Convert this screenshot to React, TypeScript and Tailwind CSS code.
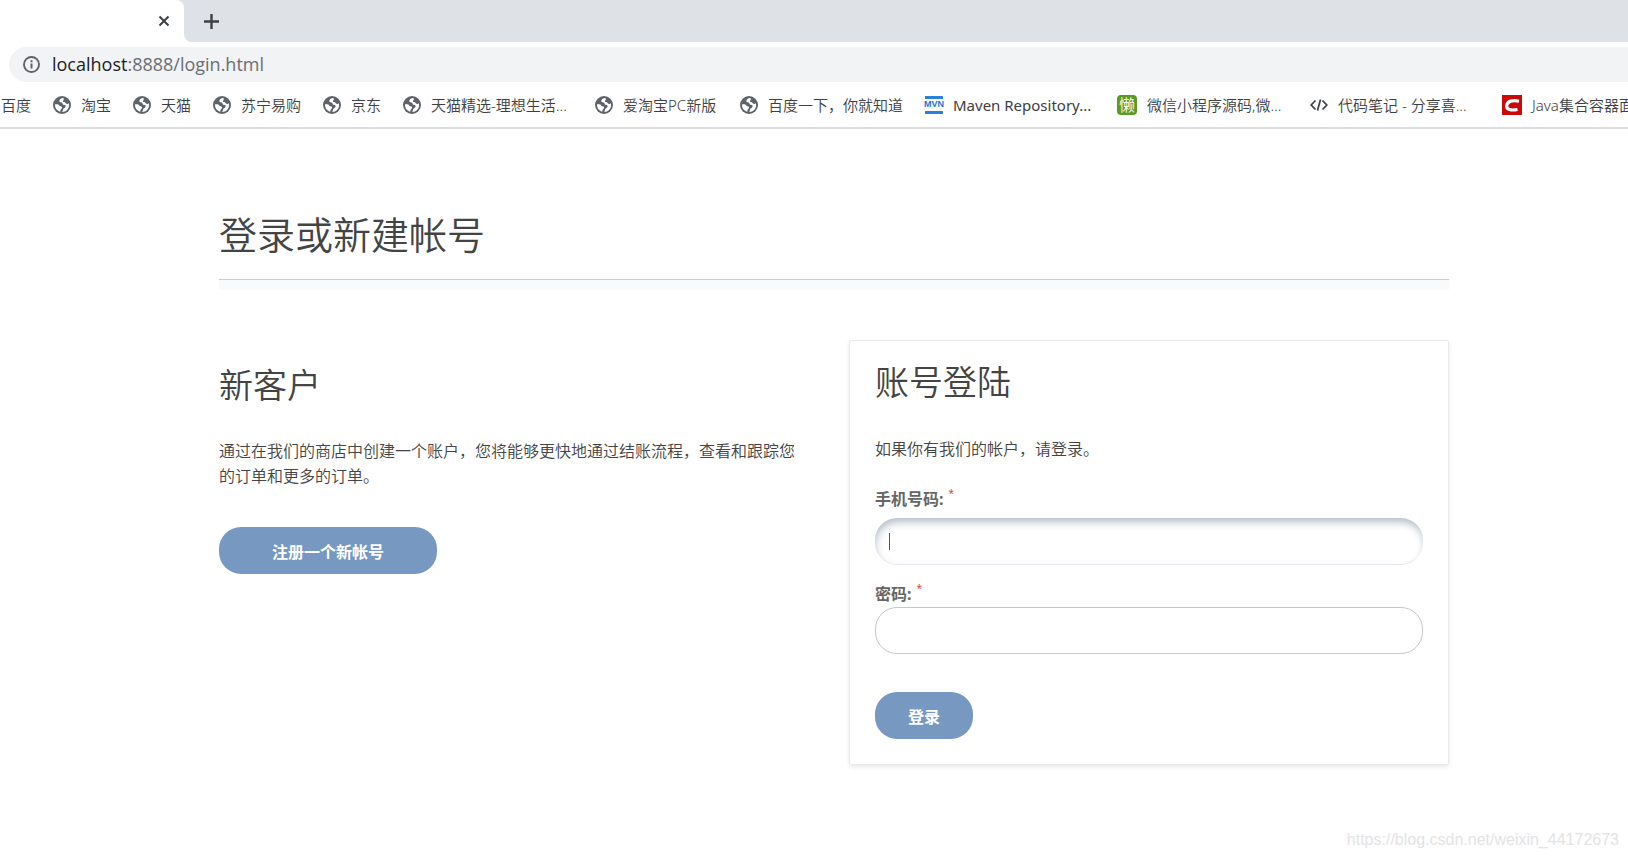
import clsx from "clsx";
import type { InputHTMLAttributes, ReactNode } from "react";

function GlobeIcon() {
  return (
    <svg viewBox="0 0 18 18" className="h-[18px] w-[18px]" aria-hidden="true">
      <circle cx="9" cy="9" r="9" fill="#5f6368" />
      <path
        d="M10.300 2.100C7.800 2.300 6.300 3.500 6.300 5.100c0 1 .8 1.300 1.900 1.300 1 0 1.300.4 1.300 1.100 0 .9.500 1.200 1.500 1.300 1.300.1 1.700.7 1.600 1.600-.1 1.200-1.300 1.500-2 2.200-.7.8-.6 2-1.400 3.400 3.900-.1 6.900-3.100 6.900-7 0-.6-.1-1.200-.2-1.700-.7.5-1.600.8-2.500.5-.9-.4-.8-1.300-1.600-1.600-.8-.4-1.800-.2-1.900-1-.1-.8.900-1 .9-1.800 0-.5-.2-.9-.5-1.300z"
        fill="#fff"
      />
      <path
        d="M2 8.300c-.2 3.600 1.700 6.400 5.300 7.400.1-.9.100-1.600.5-2.200.5-.7 1.400-1 1.300-2-.1-1.300-1.300-1.300-2.200-1.600C5.800 9.500 6 8.300 4.500 8.300z"
        fill="#fff"
      />
    </svg>
  );
}

function MavenIcon() {
  return (
    <span className="flex h-[18px] w-[18px] items-center justify-center border-y-[3px] border-[#2a80e0] font-['Liberation_Sans',sans-serif] text-[9px] font-bold text-[#1a73d9]">
      MVN
    </span>
  );
}

function LazyIcon() {
  return (
    <span className="flex h-5 w-5 items-center justify-center rounded-sm bg-[#5b9a26] text-[16px] text-white">
      懒
    </span>
  );
}

function CodeIcon() {
  return (
    <svg
      viewBox="0 0 18 18"
      className="h-[18px] w-[18px]"
      fill="none"
      stroke="#3c4043"
      strokeWidth="1.700"
      aria-hidden="true"
    >
      <path d="M5.500 4.500 1.200 9l4.300 4.500M12.500 4.500 16.800 9l-4.300 4.500M10.500 3.500l-3 11" />
    </svg>
  );
}

function CsdnIcon() {
  return (
    <svg viewBox="0 0 20 20" className="h-5 w-5" aria-hidden="true">
      <path fill="#c90a0a" d="M0 0h20v20H0z" />
      <path
        d="M17 6.200C10.500 5 5.500 5.700 4.700 10.500c-.6 4.300 4.300 5.200 10.800 4"
        fill="none"
        stroke="#fff"
        strokeWidth="3.200"
      />
    </svg>
  );
}

type Bookmark = { label: string; icon: ReactNode; className: string };

const bookmarks: Bookmark[] = [
  { label: "淘宝", icon: <GlobeIcon />, className: "w-20" },
  { label: "天猫", icon: <GlobeIcon />, className: "w-20" },
  { label: "苏宁易购", icon: <GlobeIcon />, className: "w-[110px]" },
  { label: "京东", icon: <GlobeIcon />, className: "w-20" },
  { label: "天猫精选-理想生活...", icon: <GlobeIcon />, className: "w-48" },
  { label: "爱淘宝PC新版", icon: <GlobeIcon />, className: "w-[145px]" },
  { label: "百度一下，你就知道", icon: <GlobeIcon />, className: "w-[185px]" },
  { label: "Maven Repository...", icon: <MavenIcon />, className: "w-48 font-normal" },
  { label: "微信小程序源码,微...", icon: <LazyIcon />, className: "w-[193px]" },
  { label: "代码笔记 - 分享喜...", icon: <CodeIcon />, className: "w-48" },
  { label: "Java集合容器面试题", icon: <CsdnIcon />, className: "w-48" },
];

function BrowserChrome() {
  return (
    <header className="border-b-2 border-[#dadce0]">
      <div className="flex h-[42px] bg-white">
        <div className="flex w-[184px] items-center justify-end bg-[#dee1e6]">
          <div className="flex h-full w-full items-center justify-end rounded-tr-lg bg-white pr-[14px]">
            <button type="button" aria-label="关闭标签页">
              <svg viewBox="0 0 12 12" className="h-3 w-3" stroke="#3c4043" strokeWidth="2">
                <path d="M1.500 1.500l9 9M10.500 1.500l-9 9" />
              </svg>
            </button>
          </div>
        </div>
        <div className="flex flex-1 items-center rounded-bl-lg bg-[#dee1e6] pl-5">
          <button type="button" aria-label="新标签页">
            <svg viewBox="0 0 15 15" className="h-[15px] w-[15px]" fill="#3c4043">
              <path d="M6.300 0h2.400v6.300H15v2.400H8.700V15H6.300V8.700H0V6.300h6.300z" />
            </svg>
          </button>
        </div>
      </div>

      <div className="pt-[5px] pl-[9px]">
        <div className="flex h-[35px] items-center gap-3 rounded-l-full bg-[#f1f3f4] pl-[14px]">
          <svg viewBox="0 0 17 17" className="h-[17px] w-[17px]" aria-hidden="true">
            <circle cx="8.500" cy="8.500" r="7.500" fill="none" stroke="#5f6368" strokeWidth="1.900" />
            <path d="M7.500 4.200h2v2h-2zM7.500 7.500h2v5h-2z" fill="#5f6368" />
          </svg>
          <p className="pb-0.5 font-['Open_Sans','Noto_Sans',sans-serif] text-[18px] leading-6 font-normal text-[#6a6e73]">
            <span className="text-[#202124]">localhost</span>:8888/login.html
          </p>
        </div>
      </div>

      <nav className="flex h-[45px] items-center overflow-hidden pt-px text-[15px] whitespace-nowrap text-[#3c4043]">
        <a href="#" className="w-[53px] shrink-0 pl-px">
          百度
        </a>
        {bookmarks.map(({ label, icon, className }) => (
          <a
            key={label}
            href="#"
            className={clsx("flex shrink-0 items-center gap-[10px]", className)}
          >
            {icon}
            {label}
          </a>
        ))}
      </nav>
    </header>
  );
}

const buttonClass =
  "h-[47px] rounded-[22px] bg-[#7698c1] pt-0.5 text-[16px] font-bold text-white";

type FieldProps = InputHTMLAttributes<HTMLInputElement> & {
  id: string;
  label: string;
};

function Field({ id, label, className, ...props }: FieldProps) {
  return (
    <>
      <label htmlFor={id} className="flex h-6 gap-[5px] leading-6 font-bold text-[#666]">
        {label}
        <span className="text-[10px] leading-3 font-normal text-[#e8442e]">*</span>
      </label>
      <input
        id={id}
        className={clsx("h-[47px] w-full rounded-[22px] px-[14px] outline-none", className)}
        {...props}
      />
    </>
  );
}

export default function App() {
  return (
    <div className="min-h-screen bg-white font-['Noto_Sans','Noto_Sans_CJK_SC',sans-serif] font-[350] text-[#444]">
      <BrowserChrome />

      <main className="pt-[81px] pr-[179px] pl-[219px]">
        <h1 className="border-b border-[#bdd0e8] pb-[21px] text-[38px] leading-[48px] font-[350] shadow-[0_10px_0_#f8fafc]">
          登录或新建帐号
        </h1>

        <div className="mt-[60px] grid grid-cols-2 items-start gap-[30px] text-[16px]">
          <section className="pt-[25px]">
            <h2 className="text-[34px] leading-10 font-[350]">新客户</h2>
            <p className="mt-[34px] pr-3 leading-[25px]">
              通过在我们的商店中创建一个账户，您将能够更快地通过结账流程，查看和跟踪您的订单和更多的订单。
            </p>
            <button type="button" className={clsx(buttonClass, "mt-[38px] w-[218px]")}>
              注册一个新帐号
            </button>
          </section>

          <form className="rounded-[2px] border border-[#eaeaea] px-[25px] pt-[21px] pb-[25px] shadow-[0_2px_4px_rgba(0,0,0,0.09)]">
            <h2 className="text-[34px] leading-10 font-[350]">账号登陆</h2>
            <p className="mt-[35px] mb-[25px] leading-[25px]">如果你有我们的帐户，请登录。</p>

            <div className="relative flex flex-col gap-[7px]">
              <Field
                id="phone"
                label="手机号码:"
                type="tel"
                className="border-b border-[#e6e8ef] shadow-[inset_1px_5px_8px_-1px_#b4bcc8]"
              />
              {/* text cursor of the active field */}
              <span className="absolute bottom-[15px] left-[14px] h-[17px] w-px bg-[#555]" />
            </div>
            <div className="mt-[17px] flex flex-col gap-px">
              <Field
                id="password"
                label="密码:"
                type="password"
                className="border border-[#c8c8c8]"
              />
            </div>

            <button type="submit" className={clsx(buttonClass, "mt-[38px] w-[98px]")}>
              登录
            </button>
          </form>
        </div>
      </main>

      <footer className="mt-[65px] pr-[9px] text-right font-['Liberation_Sans',sans-serif] text-[16px] leading-5 text-[#e4e4e4]">
        https://blog.csdn.net/weixin_44172673
      </footer>
    </div>
  );
}
